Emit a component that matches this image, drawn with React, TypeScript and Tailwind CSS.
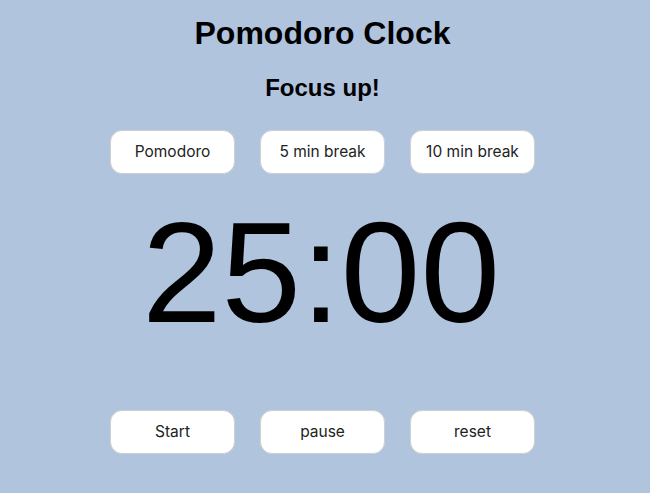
const modes = ["Pomodoro", "5 min break", "10 min break"];
const controls = ["Start", "pause", "reset"];

function PillButton({ label }: { label: string }) {
  return (
    <button className="h-[44px] w-[125px] rounded-[12px] border border-[#d0d0d0] bg-white text-[15.5px] text-[#222] font-['Inter',sans-serif]">
      {label}
    </button>
  );
}

export default function App() {
  return (
    <div className="flex min-h-[493px] w-full flex-col items-center bg-[#b0c4de] pr-[5px] font-['Liberation_Sans',Arial,sans-serif] text-black">
      <h1 className="mt-[13px] text-[32px] font-bold leading-[40px]">Pomodoro Clock</h1>
      <h2 className="mt-[20px] text-[24px] font-bold leading-[30px]">Focus up!</h2>
      <div className="mt-[27px] flex gap-[25px]">
        {modes.map((m) => (
          <PillButton key={m} label={m} />
        ))}
      </div>
      <div className="mt-[27px] pr-[3px] text-[143px] leading-none">25:00</div>
      <div className="mt-[66px] flex gap-[25px]">
        {controls.map((c) => (
          <PillButton key={c} label={c} />
        ))}
      </div>
    </div>
  );
}
